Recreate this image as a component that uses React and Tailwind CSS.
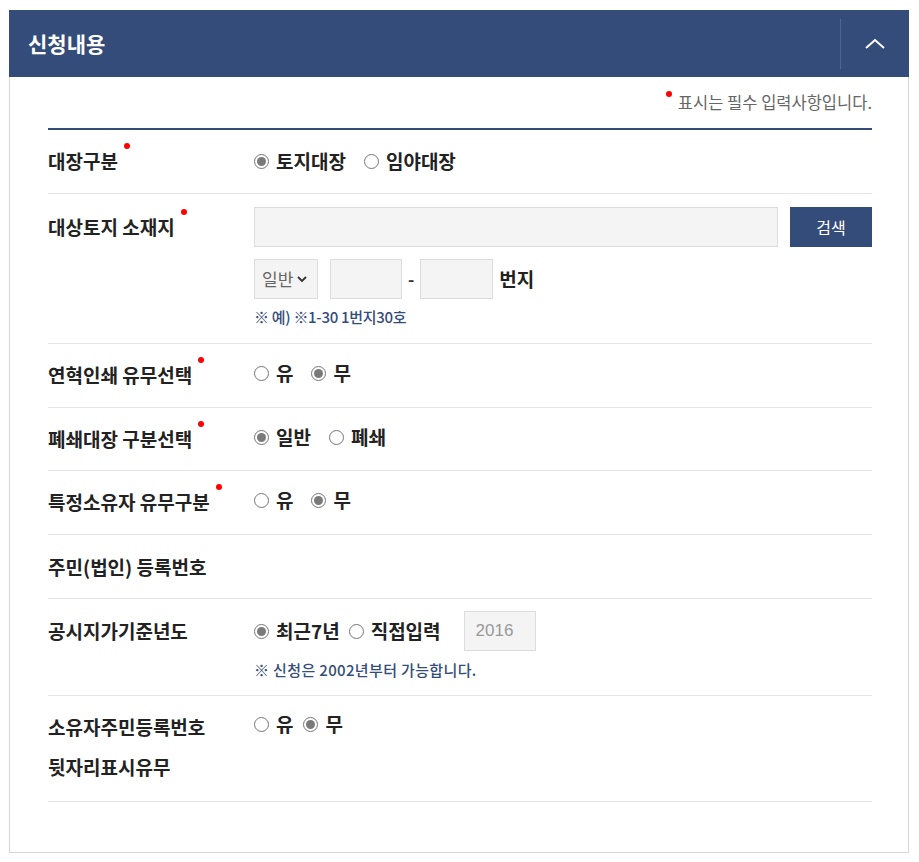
import React from "react";

const font = { fontFamily: '"Noto Sans CJK KR", "Noto Sans", sans-serif' };

function Dot() {
  return <span className="inline-block w-[6px] h-[6px] rounded-full bg-[#ff0000] align-top ml-[6px] mt-[2px]" />;
}

function Radio({ checked, label, className = "" }) {
  return (
    <label className={"inline-flex items-center " + className}>
      <span className="w-[15px] h-[15px] rounded-full border border-[#767676] bg-white flex items-center justify-center shrink-0">
        {checked && <span className="w-[9px] h-[9px] rounded-full bg-[#7a7a7a]" />}
      </span>
      <span className="ml-[7px] text-[19px] font-bold text-[#222] leading-[24px]">{label}</span>
    </label>
  );
}

function Row({ label, required, children, className = "" }) {
  return (
    <div className={"flex border-b border-[#e5e5e5] " + className}>
      <div className="w-[206px] shrink-0 text-[19px] font-bold text-[#222] leading-[40px]">
        {label}
        {required && <Dot />}
      </div>
      <div className="flex-1">{children}</div>
    </div>
  );
}

export default function App() {
  return (
    <div className="bg-white w-[919px] h-[862px] pt-[10px] pl-[9px]" style={font}>
      <div className="w-[900px] border border-t-0 border-[#d6d6d6] h-[843px]">
        {/* 헤더 */}
        <div className="h-[67px] bg-[#344c79] flex items-center justify-between -ml-px -mr-px">
          <h2 className="pl-[19px] text-[21px] font-bold text-white">신청내용</h2>
          <div className="h-[50px] w-[69px] border-l border-[#4e6590] flex items-center justify-center">
            <svg width="22" height="14" viewBox="0 0 22 14" fill="none">
              <path d="M2 11 L11 3 L20 11" stroke="#fff" strokeWidth="2" />
            </svg>
          </div>
        </div>

        <div className="pl-[38px] pr-[36px]">
          <div className="h-[51px] flex items-center justify-end">
            <span className="inline-block w-[6px] h-[6px] rounded-full bg-[#ff0000] self-start mt-[14px] mr-[6px]" />
            <span className="text-[16.5px] text-[#666]">표시는 필수 입력사항입니다.</span>
          </div>
          <div className="h-[2px] bg-[#344c79]" />

          <Row label="대장구분" required className="py-[11px] h-[64px]">
            <div className="flex items-center h-[40px]">
              <Radio checked label="토지대장" />
              <Radio label="임야대장" className="ml-[18px]" />
            </div>
          </Row>

          <Row label="대상토지 소재지" required className="pt-[13px] h-[150px]">
            <div className="flex">
              <div className="w-[524px] h-[40px] bg-[#f4f4f4] border border-[#dcdcdc]" />
              <button className="ml-[12px] w-[82px] h-[40px] bg-[#344c79] text-white text-[16px]">검색</button>
            </div>
            <div className="flex items-center mt-[12px]">
              <div className="w-[64px] h-[40px] bg-[#f4f4f4] border border-[#dcdcdc] flex items-center pl-[7px] text-[17px] text-[#666]">
                일반
                <svg className="ml-[4px]" width="10" height="8" viewBox="0 0 10 8" fill="none">
                  <path d="M1 2 L5 6 L9 2" stroke="#333" strokeWidth="1.8" />
                </svg>
              </div>
              <div className="ml-[12px] w-[72px] h-[40px] bg-[#f4f4f4] border border-[#dcdcdc]" />
              <span className="mx-[6px] text-[17px] font-bold text-[#333]">-</span>
              <div className="w-[73px] h-[40px] bg-[#f4f4f4] border border-[#dcdcdc]" />
              <span className="ml-[6px] text-[19px] font-bold text-[#222]">번지</span>
            </div>
            <p className="mt-[7px] text-[15px] font-medium text-[#344c79] tracking-[-0.3px]">※ 예) ※1-30 1번지30호</p>
          </Row>

          <Row label="연혁인쇄 유무선택" required className="py-[11px] h-[64px]">
            <div className="flex items-center h-[36px]">
              <Radio label="유" />
              <Radio checked label="무" className="ml-[18px]" />
            </div>
          </Row>

          <Row label="폐쇄대장 구분선택" required className="py-[11px] h-[63px]">
            <div className="flex items-center h-[36px]">
              <Radio checked label="일반" />
              <Radio label="폐쇄" className="ml-[18px]" />
            </div>
          </Row>

          <Row label="특정소유자 유무구분" required className="py-[11px] h-[64px]">
            <div className="flex items-center h-[36px]">
              <Radio label="유" />
              <Radio checked label="무" className="ml-[18px]" />
            </div>
          </Row>

          <Row label="주민(법인) 등록번호" className="py-[12px] h-[64px]" />

          <Row label="공시지가기준년도" className="pt-[12px] h-[97px]">
            <div className="flex items-center h-[40px]">
              <Radio checked label="최근7년" />
              <Radio label="직접입력" className="ml-[9px]" />
              <div className="ml-[23px] w-[72px] h-[40px] bg-[#f4f4f4] border border-[#dcdcdc] flex items-center pl-[11px] text-[17px] text-[#999]" style={{ fontFamily: '"Liberation Sans", Arial, sans-serif' }}>
                2016
              </div>
            </div>
            <p className="mt-[8px] text-[15px] font-medium text-[#344c79] tracking-[0.35px]">※ 신청은 2002년부터 가능합니다.</p>
          </Row>

          <Row label={<>소유자주민등록번호<br />뒷자리표시유무</>} className="pt-[11px] h-[106px]">
            <div className="flex items-center h-[34px]">
              <Radio label="유" />
              <Radio checked label="무" className="ml-[10px]" />
            </div>
          </Row>
        </div>
      </div>
    </div>
  );
}
